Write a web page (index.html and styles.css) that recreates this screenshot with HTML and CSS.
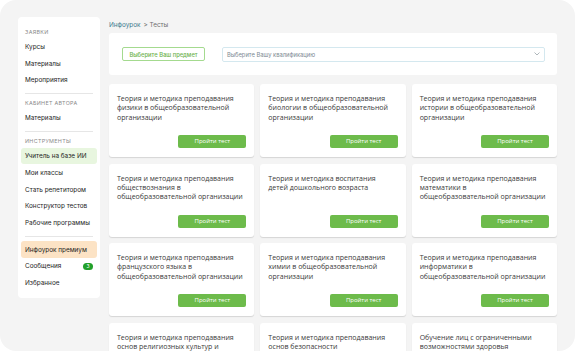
FILE: index.html
```html
<!DOCTYPE html>
<html lang="ru">

<head>
    <meta charset="UTF-8">
    <meta name="viewport" content="width=device-width, initial-scale=1.0">
    <title>Тесты</title>
    <link rel="stylesheet" href="styles.css">
</head>

<body>
    <div class="frame">
        <!-- меню -->
        <div class="side_box">
            <p class="side_title">Заявки</p>
            <a class="side_item" href="">Курсы</a>
            <a class="side_item" href="">Материалы</a>
            <a class="side_item" href="">Мероприятия</a>
            <div class="side_line"></div>
            <p class="side_title">Кабинет автора</p>
            <a class="side_item" href="">Материалы</a>
            <div class="side_line"></div>
            <p class="side_title">Инструменты</p>
            <a class="side_item side_green" href="">Учитель на базе ИИ</a>
            <a class="side_item" href="">Мои классы</a>
            <a class="side_item" href="">Стать репетитором</a>
            <a class="side_item" href="">Конструктор тестов</a>
            <a class="side_item" href="">Рабочие программы</a>
            <div class="side_line"></div>
            <a class="side_item side_orange" href="">Инфоурок премиум</a>
            <a class="side_item" href="">Сообщения <span class="side_badge">3</span></a>
            <a class="side_item" href="">Избранное</a>
        </div>
        <!-- контент -->
        <div class="main_box">
            <div class="crumbs">
                <a href="">Инфоурок</a>
                <span>&gt; Тесты</span>
            </div>
            <div class="filter_box">
                <button class="filter_btn">Выберите Ваш предмет</button>
                <div class="filter_select">
                    <span>Выберите Вашу квалификацию</span>
                    <svg width="6" height="4" viewBox="0 0 6 4">
                        <polyline points="0.5,0.5 3,3 5.5,0.5" fill="none" stroke="#9aa4aa" stroke-width="0.8" />
                    </svg>
                </div>
            </div>
            <ul class="test_list">
                <li>
                    <p>Теория и методика преподавания физики в общеобразовательной организации</p>
                    <a href="">Пройти тест</a>
                </li>
                <li>
                    <p>Теория и методика преподавания биологии в общеобразовательной организации</p>
                    <a href="">Пройти тест</a>
                </li>
                <li>
                    <p>Теория и методика преподавания истории в общеобразовательной организации</p>
                    <a href="">Пройти тест</a>
                </li>
                <li>
                    <p>Теория и методика преподавания обществознания в общеобразовательной организации</p>
                    <a href="">Пройти тест</a>
                </li>
                <li>
                    <p>Теория и методика воспитания детей дошкольного возраста</p>
                    <a href="">Пройти тест</a>
                </li>
                <li>
                    <p>Теория и методика преподавания математики в общеобразовательной организации</p>
                    <a href="">Пройти тест</a>
                </li>
                <li>
                    <p>Теория и методика преподавания французского языка в общеобразовательной организации</p>
                    <a href="">Пройти тест</a>
                </li>
                <li>
                    <p>Теория и методика преподавания химии в общеобразовательной организации</p>
                    <a href="">Пройти тест</a>
                </li>
                <li>
                    <p>Теория и методика преподавания информатики в общеобразовательной организации</p>
                    <a href="">Пройти тест</a>
                </li>
                <li>
                    <p>Теория и методика преподавания основ религиозных культур и светской этики</p>
                    <a href="">Пройти тест</a>
                </li>
                <li>
                    <p>Теория и методика преподавания основ безопасности</p>
                    <a href="">Пройти тест</a>
                </li>
                <li>
                    <p>Обучение лиц с ограниченными возможностями здоровья</p>
                    <a href="">Пройти тест</a>
                </li>
            </ul>
        </div>
    </div>
</body>

</html>
```

FILE: styles.css
```css
* {
    padding: 0;
    margin: 0;
    list-style: none;
    outline: none;
    text-decoration: none;
    box-sizing: border-box;
}

body {
    background: #FFFFFF;
    font-family: Inter, "Noto Sans", sans-serif;
}

.frame {
    width: 575px;
    height: 351px;
    background: #F4F4F4;
    border-radius: 16px;
    overflow: hidden;
    display: flex;
    align-items: flex-start;
    padding: 17px 18px 0 18px;
    gap: 9px;
}

/* меню */
.side_box {
    width: 82px;
    flex-shrink: 0;
    background: #FFFFFF;
    border-radius: 4px;
    padding: 10px 3px 6px 3px;
    display: flex;
    flex-direction: column;
}

.side_title {
    font-size: 5.4px;
    line-height: 10px;
    letter-spacing: 0.3px;
    text-transform: uppercase;
    color: #8A8A8A;
    padding: 0 4px;
    margin-bottom: 1.5px;
    white-space: nowrap;
}

.side_item {
    display: flex;
    align-items: center;
    justify-content: space-between;
    height: 16.8px;
    padding: 0 4px;
    border-radius: 3px;
    font-size: 6.4px;
    color: #1E1E1E;
    white-space: nowrap;
}

.side_green {
    background: #E8F6DF;
}

.side_orange {
    background: #FCE3C5;
}

.side_badge {
    width: 10px;
    height: 7px;
    border-radius: 4px;
    background: #22A02A;
    color: #FFFFFF;
    font-size: 5px;
    line-height: 7px;
    text-align: center;
}

.side_line {
    height: 1px;
    background: #E6E6E6;
    margin: 4.5px 4px 4px 4px;
}

/* контент */
.main_box {
    width: 448px;
    flex-shrink: 0;
}

.crumbs {
    height: 16px;
    display: flex;
    align-items: center;
    gap: 3px;
    font-size: 6.4px;
}

.crumbs>a {
    color: #3C7A8E;
}

.crumbs>span {
    color: #707070;
}

.filter_box {
    height: 42px;
    background: #FFFFFF;
    border-radius: 3px;
    display: flex;
    align-items: center;
    padding: 0 12px 0 13px;
    gap: 17px;
}

.filter_btn {
    width: 83px;
    height: 14px;
    flex-shrink: 0;
    background: #FFFFFF;
    border: 1px solid #A4DA8F;
    border-radius: 2px;
    color: #6DB24E;
    font-family: Inter, "Noto Sans", sans-serif;
    font-size: 5.8px;
    font-weight: 500;
}

.filter_select {
    flex: 1;
    height: 15px;
    border: 1px solid #D4E8EF;
    border-radius: 2px;
    display: flex;
    align-items: center;
    justify-content: space-between;
    padding: 0 4px 0 4px;
    font-size: 5.8px;
    color: #7D8A93;
}

.test_list {
    margin-top: 9px;
    display: grid;
    grid-template-columns: repeat(3, 1fr);
    grid-auto-rows: 73px;
    gap: 6.5px 6px;
}

.test_list>li {
    background: #FFFFFF;
    border-radius: 3px;
    box-shadow: 0 1px 1px rgba(0, 0, 0, 0.13);
    display: flex;
    flex-direction: column;
    padding: 10px 10px 9px 8px;
}

.test_list>li>p {
    font-family: "Open Sans", "Noto Sans", sans-serif;
    font-size: 7px;
    line-height: 9.4px;
    color: #3A3A3A;
}

.test_list>li>a {
    margin-top: auto;
    align-self: flex-end;
    width: 68px;
    height: 13px;
    margin-right: -2px;
    background: #6DBB4B;
    border-radius: 2px;
    color: #FFFFFF;
    font-family: "Open Sans", "Noto Sans", sans-serif;
    font-size: 6px;
    line-height: 13px;
    text-align: center;
}
```
